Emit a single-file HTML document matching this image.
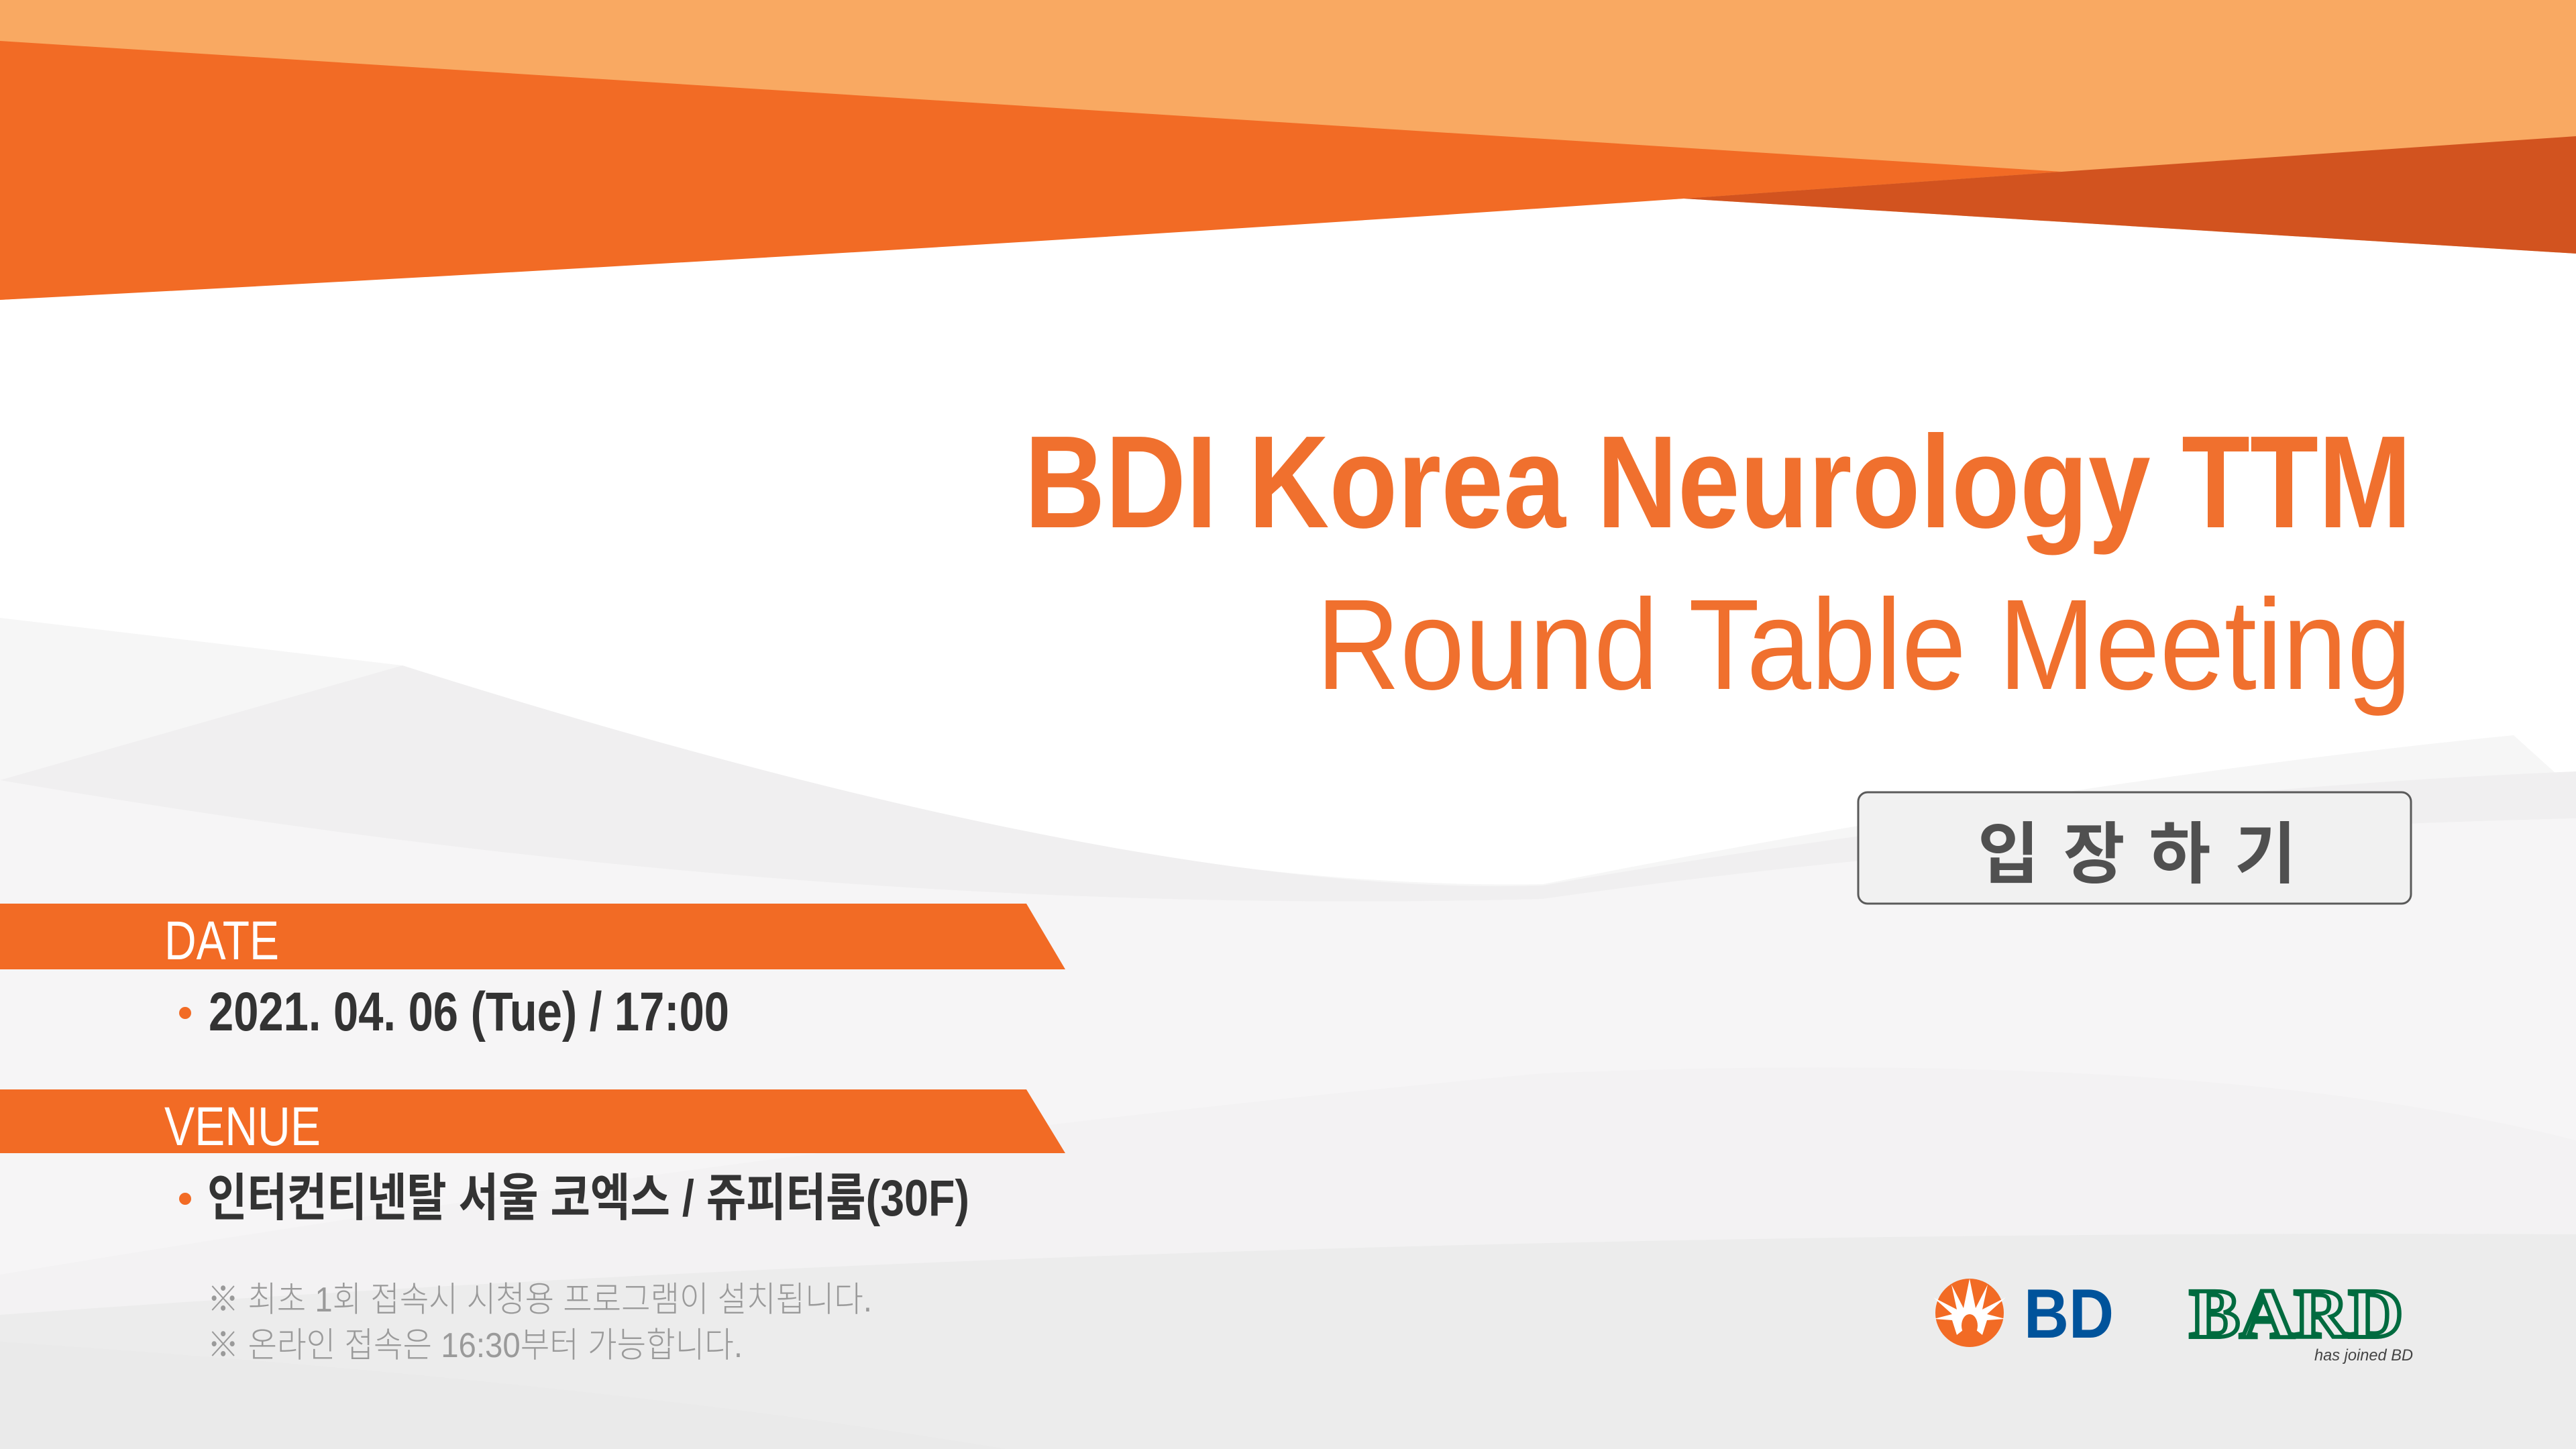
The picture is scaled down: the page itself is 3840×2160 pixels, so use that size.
<!DOCTYPE html>
<html><head><meta charset="utf-8"><style>
html,body{margin:0;padding:0;width:3840px;height:2160px;overflow:hidden;background:#fff}
svg{display:block}
</style></head><body>
<svg width="3840" height="2160" viewBox="0 0 3840 2160" xmlns="http://www.w3.org/2000/svg">
<rect width="3840" height="2160" fill="#ffffff"/>
<path d="M0,921 L600,992 Q1600,1330 2300,1318 Q3100,1160 3747,1096 L3840,1180 V2160 H0 Z" fill="#f6f6f6"/>
<path d="M0,1163 L600,992 Q1700,1340 2300,1320 Q3100,1180 3840,1150 V1220 Q3000,1240 2300,1340 Q1200,1370 0,1163 Z" fill="#f0eff0"/>
<path d="M0,1163 Q1200,1370 2300,1340 Q3000,1240 3840,1220 V2160 H0 Z" fill="#f6f5f6"/>
<path d="M0,1900 Q1200,1700 2300,1600 Q3300,1560 3840,1700 V2160 H0 Z" fill="#f3f2f3"/>
<path d="M0,1960 Q1800,1830 3840,1840 V2160 H0 Z" fill="#ececec"/>
<path d="M0,2000 Q900,2060 1500,2160 H0 Z" fill="#eaeaea"/>
<polygon points="0,0 3840,0 3840,378 2510,296 0,447" fill="#f9a962"/>
<path d="M0,61 L3073,256 L2510,296 Q1300,380 0,447 Z" fill="#f26b25"/>
<polygon points="3073,256 3840,203 3840,378 2510,296" fill="#d2531f"/>
<text x="1527" y="786" font-family="Liberation Sans, sans-serif" font-weight="bold" font-size="196" fill="#f0702e" textLength="2068" lengthAdjust="spacingAndGlyphs">BDI Korea Neurology TTM</text>
<text x="1962" y="1027" font-family="Liberation Sans, sans-serif" font-size="192" fill="#f0702e" textLength="1633" lengthAdjust="spacingAndGlyphs">Round Table Meeting</text>
<rect x="2770" y="1181" width="824" height="166" rx="14" fill="#f1f1f1" stroke="#5a5a5a" stroke-width="3"/>
<text x="2948" y="1308" font-family="Liberation Sans, 'Noto Sans CJK KR', sans-serif" font-weight="bold" font-size="100" fill="#505050" textLength="475" lengthAdjust="spacing">입 장 하 기</text>
<polygon points="0,1347 1530,1347 1588,1445 0,1445" fill="#f26b25"/>
<text x="245" y="1430" font-family="Liberation Sans, sans-serif" font-size="82" fill="#ffffff" textLength="171" lengthAdjust="spacingAndGlyphs">DATE</text>
<circle cx="276" cy="1510" r="9" fill="#f26b25"/>
<text x="311" y="1536" font-family="Liberation Sans, sans-serif" font-weight="bold" font-size="82" fill="#333333" textLength="776" lengthAdjust="spacingAndGlyphs">2021. 04. 06 (Tue) / 17:00</text>
<polygon points="0,1624 1530,1624 1588,1719 0,1719" fill="#f26b25"/>
<text x="245" y="1707" font-family="Liberation Sans, sans-serif" font-size="82" fill="#ffffff" textLength="233" lengthAdjust="spacingAndGlyphs">VENUE</text>
<circle cx="276" cy="1787" r="9" fill="#f26b25"/>
<text x="309" y="1812" font-family="Liberation Sans, 'Noto Sans CJK KR', sans-serif" font-weight="bold" font-size="76" fill="#333333" textLength="1136" lengthAdjust="spacingAndGlyphs">인터컨티넨탈 서울 코엑스 / 쥬피터룸(30F)</text>
<text x="309" y="1955" font-family="Liberation Sans, 'Noto Sans CJK KR', sans-serif" font-weight="300" font-size="52" fill="#9a9a9a" textLength="991" lengthAdjust="spacingAndGlyphs">※ 최초 1회 접속시 시청용 프로그램이 설치됩니다.</text>
<text x="309" y="2023" font-family="Liberation Sans, 'Noto Sans CJK KR', sans-serif" font-weight="300" font-size="52" fill="#9a9a9a" textLength="798" lengthAdjust="spacingAndGlyphs">※ 온라인 접속은 16:30부터 가능합니다.</text>
<ellipse cx="2936" cy="1957" rx="51" ry="51" fill="#f26b25"/>
<polygon fill="#ffffff" points="2936,1906 2945,1950 2963,1915 2955,1952 2990,1934 2962,1959 2989,1966 2962,1968 2955,1990 2936,1975 2917,1990 2910,1968 2883,1966 2910,1959 2882,1934 2917,1952 2909,1915 2927,1950"/>
<ellipse cx="2936" cy="1976" rx="12" ry="17" fill="#f26b25"/>
<text x="3017" y="1994" font-family="Liberation Sans, sans-serif" font-weight="bold" font-size="104" fill="#00539b" textLength="134" lengthAdjust="spacingAndGlyphs">BD</text>
<text x="3264" y="1993" font-family="Liberation Serif, serif" font-weight="bold" font-size="104" fill="none" stroke="#006b3f" stroke-width="6" textLength="318" lengthAdjust="spacingAndGlyphs">BARD</text>
<text x="3450" y="2028" font-family="Liberation Sans, sans-serif" font-style="italic" font-size="24" fill="#444444" textLength="147" lengthAdjust="spacingAndGlyphs">has joined BD</text>
</svg>
</body></html>
